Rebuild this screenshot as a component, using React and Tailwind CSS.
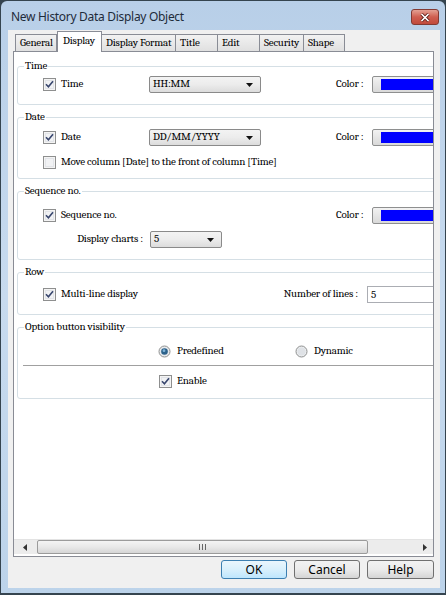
import React from "react";

const TABS = [
  { label: "General", w: "w-[42px]" },
  { label: "Display", w: "w-[45px]", active: true },
  { label: "Display Format", w: "w-[75px]" },
  { label: "Title", w: "w-[43px]" },
  { label: "Edit", w: "w-[43px]" },
  { label: "Security", w: "w-[45px]" },
  { label: "Shape", w: "w-[42px]" },
];

function CheckBox({ checked }) {
  return (
    <svg width="13" height="13" viewBox="0 0 13 13" className="shrink-0">
      <rect x="0.5" y="0.5" width="12" height="12" fill="#f4f4f4" stroke="#8e8f8f" />
      <rect x="2" y="2" width="9" height="9" fill="#e2e4e8" />
      <rect x="3" y="3" width="7" height="7" fill="#f1f2f4" />
      {checked && (
        <path d="M3 6.3 L5.4 8.8 L10 3.2" fill="none" stroke="#38466e" strokeWidth="1.6" />
      )}
    </svg>
  );
}

function Radio({ checked }) {
  return (
    <svg width="13" height="13" viewBox="0 0 13 13" className="shrink-0">
      <circle cx="6.5" cy="6.5" r="5.5" fill="#eceef0" stroke="#8e8f8f" />
      <circle cx="6.5" cy="6.5" r="4" fill="#dfe2e6" />
      {checked && (
        <>
          <circle cx="6.5" cy="6.5" r="3.3" fill="#2c628b" />
          <circle cx="6" cy="5.7" r="1.4" fill="#7fb3d8" />
        </>
      )}
    </svg>
  );
}

function Arrow() {
  return (
    <svg width="7" height="4" viewBox="0 0 7 4">
      <path d="M0 0 L7 0 L3.5 4 Z" fill="#111" />
    </svg>
  );
}

function Select({ value, w }) {
  return (
    <div
      className={`${w} h-[17px] shrink-0 flex items-center justify-between pl-[3px] pr-[7px] border border-[#8a8a8a] rounded-[2px] bg-gradient-to-b from-[#f3f3f3] via-[#ececec] to-[#dcdcdc]`}
    >
      <span>{value}</span>
      <Arrow />
    </div>
  );
}

function ColorBox() {
  return (
    <div className="ml-[75px] flex items-center">
      <span className="w-[36px]">Color :</span>
      <div className="w-[70px] h-[17px] flex border border-[#8e8f8f] rounded-[2px] bg-gradient-to-b from-[#f2f2f2] to-[#d9d9d9] pl-[8px] py-[2px]">
        <div className="flex-1 bg-[#0000ff]" />
      </div>
    </div>
  );
}

function CheckLabel({ checked, label, w = "w-[106px]" }) {
  return (
    <div className={`${w} shrink-0 flex items-center gap-[5px]`}>
      <CheckBox checked={checked} />
      <span className="whitespace-nowrap">{label}</span>
    </div>
  );
}

function Group({ title, h, children }) {
  return (
    <div className={`relative ${h} w-[430px] mt-[12px] border border-[#d5dfe5] rounded-[3px]`}>
      <span className="absolute left-[6px] top-[-9px] bg-white px-[1px] leading-[16px]">{title}</span>
      {children}
    </div>
  );
}

export default function App() {
  return (
    <div className="w-[446px] h-[595px] bg-[#35444f] p-px pb-[2px] overflow-hidden">
      <div className="h-full flex flex-col rounded-t-[6px] bg-gradient-to-b from-[#b8cfe8] via-[#c8dbef] to-[#bcd3ea]">
        {/* title bar */}
        <div className="h-[29px] shrink-0 flex items-start pt-[8px] pl-[10px] pr-[6px] font-sans">
          <span className="text-[12px] tracking-[-0.3px] leading-[16px] text-[#1e2b3a]">New History Data Display Object</span>
          <div className="ml-auto w-[28px] h-[16px] flex items-center justify-center rounded-[3px] border border-[#833a33] bg-gradient-to-b from-[#e3a093] via-[#cf5e50] to-[#c14a3c]">
            <svg width="10" height="9" viewBox="0 0 10 9">
              <path d="M1.5 1 L8.5 8 M8.5 1 L1.5 8" stroke="#5a1d17" strokeWidth="3.2" />
              <path d="M1.5 1 L8.5 8 M8.5 1 L1.5 8" stroke="#fff" strokeWidth="1.7" />
            </svg>
          </div>
        </div>

        {/* client */}
        <div className="flex-1 ml-[7px] mr-[5px] mb-[5px] bg-[#f0f0f0] flex flex-col pt-[2px]">
          {/* tabs */}
          <div className="h-[19px] flex items-end pl-[7px] font-serif text-[11px] tracking-[-0.2px] text-black">
            {TABS.map((t) =>
              t.active ? (
                <div
                  key={t.label}
                  className={`${t.w} relative z-10 h-[21px] -mb-[1px] bg-white border border-b-0 border-[#898c95] pl-[5px] pt-[2px] leading-[14px]`}
                >
                  {t.label}
                </div>
              ) : (
                <div
                  key={t.label}
                  className={`${t.w} h-[17px] -ml-px first:ml-0 bg-gradient-to-b from-[#f2f2f2] to-[#e0e0e0] border border-b-0 border-[#898c95] pl-[4px] leading-[15px] whitespace-nowrap overflow-hidden`}
                >
                  {t.label}
                </div>
              )
            )}
          </div>

          {/* tab panel */}
          <div className="ml-[5px] w-[421px] h-[506px] border border-[#898c95] bg-white flex flex-col font-serif text-[11px] tracking-[-0.2px] text-black">
            <div className="h-[487px] overflow-hidden pl-[3px] pt-[2px]">
              <Group title="Time" h="h-[39px]">
                <div className="pt-[9px] pl-[25px] flex items-center h-[26px]">
                  <CheckLabel checked label="Time" />
                  <Select value="HH:MM" w="w-[112px]" />
                  <ColorBox />
                </div>
              </Group>

              <Group title="Date" h="h-[62px]">
                <div className="pt-[11px] pl-[25px]">
                  <div className="flex items-center h-[17px]">
                    <CheckLabel checked label="Date" />
                    <Select value="DD/MM/YYYY" w="w-[112px]" />
                    <ColorBox />
                  </div>
                  <div className="mt-[8px] flex items-center h-[17px]">
                    <CheckLabel label="Move column [Date] to the front of column [Time]" w="w-[300px]" />
                  </div>
                </div>
              </Group>

              <Group title="Sequence no." h="h-[69px]">
                <div className="pt-[15px] pl-[25px]">
                  <div className="flex items-center h-[17px]">
                    <CheckLabel checked label="Sequence no." />
                    <div className="w-[112px] shrink-0" />
                    <ColorBox />
                  </div>
                  <div className="mt-[7px] -ml-[25px] flex items-center h-[17px]">
                    <span className="w-[132px] shrink-0 text-right pr-[7px]">Display charts :</span>
                    <Select value="5" w="w-[72px]" />
                  </div>
                </div>
              </Group>

              <Group title="Row" h="h-[43px]">
                <div className="pt-[13px] pl-[25px] flex items-center h-[30px]">
                  <CheckLabel checked label="Multi-line display" />
                  <span className="w-[218px] shrink-0 text-right pr-[9px]">Number of lines :</span>
                  <div className="w-[80px] h-[17px] border border-[#abadb3] bg-white pl-[3px] leading-[15px]">5</div>
                </div>
              </Group>

              <Group title="Option button visibility" h="h-[72px]">
                <div className="pt-[15px]">
                  <div className="flex items-center h-[17px] pl-[140px]">
                    <div className="w-[137px] flex items-center gap-[6px]">
                      <Radio checked />
                      <span>Predefined</span>
                    </div>
                    <div className="flex items-center gap-[6px]">
                      <Radio />
                      <span>Dynamic</span>
                    </div>
                  </div>
                  <div className="mt-[5px] ml-[5px] h-[2px] border-t border-[#a0a0a0] border-b border-b-white" />
                  <div className="mt-[6px] flex items-center h-[17px] pl-[141px]">
                    <CheckLabel checked label="Enable" />
                  </div>
                </div>
              </Group>
            </div>

            {/* horizontal scrollbar */}
            <div className="h-[15px] flex items-stretch bg-[#ececec] border-t border-[#e3e3e3]">
              <div className="w-[17px] flex items-center justify-center pl-[4px]">
                <svg width="4" height="7" viewBox="0 0 4 7"><path d="M4 0 L0 3.5 L4 7 Z" fill="#333" /></svg>
              </div>
              <div className="ml-[6px] w-[331px] flex items-center justify-center gap-[2px] border border-[#9b9b9b] rounded-[2px] bg-gradient-to-b from-[#f4f4f4] via-[#e8e8e8] to-[#d6d6d6]">
                <div className="w-px h-[6px] bg-[#666]" />
                <div className="w-px h-[6px] bg-[#666]" />
                <div className="w-px h-[6px] bg-[#666]" />
              </div>
              <div className="flex-1" />
              <div className="w-[17px] flex items-center justify-center">
                <svg width="4" height="7" viewBox="0 0 4 7"><path d="M0 0 L4 3.5 L0 7 Z" fill="#333" /></svg>
              </div>
            </div>
          </div>

          {/* buttons */}
          <div className="mt-[3px] flex justify-end gap-[7px] pr-[6px] font-sans text-[12px] text-black">
            <button className="w-[66px] h-[19px] rounded-[3px] border border-[#3c7fb1] bg-gradient-to-b from-[#eaf6fd] via-[#d9f0fc] to-[#bee6fd] leading-[17px]">
              OK
            </button>
            <button className="w-[66px] h-[19px] rounded-[3px] border border-[#707070] bg-gradient-to-b from-[#f2f2f2] via-[#ebebeb] to-[#d5d5d5] leading-[17px]">
              Cancel
            </button>
            <button className="w-[67px] h-[19px] rounded-[3px] border border-[#707070] bg-gradient-to-b from-[#f2f2f2] via-[#ebebeb] to-[#d5d5d5] leading-[17px]">
              Help
            </button>
          </div>
        </div>
      </div>
    </div>
  );
}
